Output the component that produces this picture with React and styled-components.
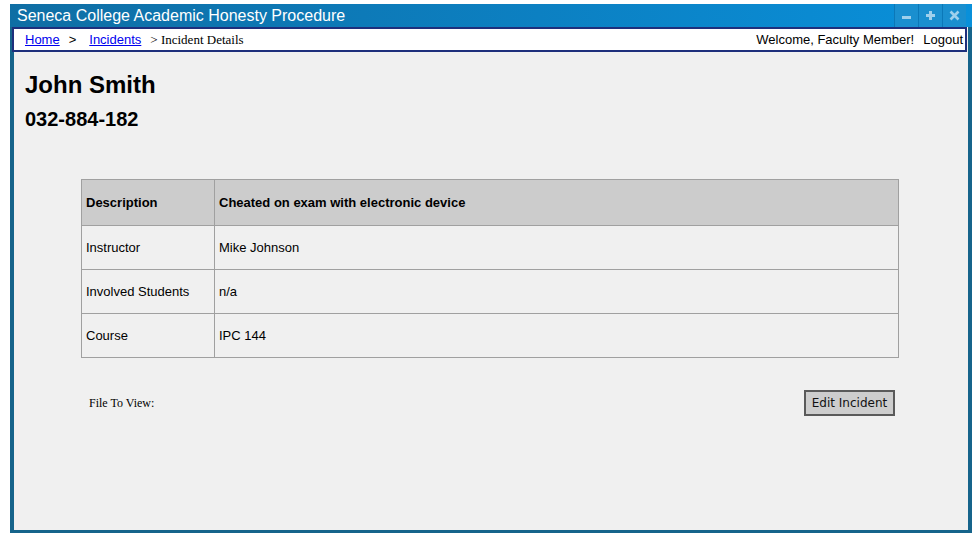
import React from 'react';
import styled, { createGlobalStyle } from 'styled-components';

const Global = createGlobalStyle`
  body {
    margin: 0;
    background: #ffffff;
    font-family: "Liberation Sans", Arial, sans-serif;
  }
`

const Window = styled.div`
  margin: 4px 0 0 10px;
  width: 962px;
  height: 529px;
  display: flex;
  flex-direction: column;
`

const TitleBar = styled.div`
  height: 23px;
  display: flex;
  align-items: stretch;
  background: linear-gradient(to right, #0f6ea4 0%, #0c80c2 55%, #0990da 100%);
`

const Title = styled.div`
  flex: 1;
  padding-left: 7px;
  color: #ffffff;
  font-size: 16px;
  line-height: 23px;
`

const WinButtons = styled.div`
  display: flex;
  padding-right: 6px;
`

const WinButton = styled.div`
  width: 23px;
  border-left: 1px solid #0b78b8;
  background: #1a8fcf;
  display: flex;
  align-items: center;
  justify-content: center;
`

const Frame = styled.div`
  flex: 1;
  background: #f0f0f0;
  border: 4px solid #16648b;
  border-top: none;
  border-bottom-width: 3px;
  display: flex;
  flex-direction: column;
`

const NavBar = styled.div`
  margin: 0 1px 0 -2px;
  height: 21px;
  border: 2px solid #1e2f7c;
  background: #ffffff;
  display: flex;
  align-items: center;
  justify-content: space-between;
  padding: 0 2px 0 11px;
  font-size: 13px;
`

const Crumbs = styled.div`
  display: flex;
  align-items: center;
`

const Link = styled.a`
  color: #0000ee;
  text-decoration: underline;
`

const Sep = styled.span`
  margin: ${p => p.$gap || '0 13px 0 9px'};
  color: #000;
`

const Current = styled.span`
  margin-left: 9px;
  font-family: "Liberation Serif", "Times New Roman", serif;
  font-size: 13px;
  color: #000;
`

const UserBox = styled.div`
  display: flex;
  gap: 9px;
  color: #000;
`

const Content = styled.div`
  padding: 19px 0 0 11px;
`

const Name = styled.h1`
  margin: 0;
  font-size: 24px;
  line-height: 28px;
  font-weight: bold;
  color: #000;
`

const StudentId = styled.h2`
  margin: 8px 0 0;
  font-size: 20px;
  line-height: 24px;
  font-weight: bold;
  color: #000;
`

const Details = styled.div`
  margin: 48px 0 0 56px;
  width: 818px;
`

const Table = styled.table`
  width: 818px;
  border-collapse: collapse;
  font-size: 13px;
  color: #000;
`

const Cell = styled.td`
  border: 1px solid #a0a0a0;
  padding: 0 0 0 4px;
  height: 43px;
  width: ${p => p.$w || 'auto'};
  font-weight: ${p => (p.$head ? 'bold' : 'normal')};
  background: ${p => (p.$head ? '#cccccc' : 'transparent')};
`

const HeadRow = styled.tr`
  height: 46px;
`

const Footer = styled.div`
  margin-top: 32px;
  display: flex;
  justify-content: space-between;
  align-items: flex-start;
  padding: 0 4px 0 8px;
`

const FileLabel = styled.span`
  margin-top: 6px;
  font-family: "Liberation Serif", "Times New Roman", serif;
  font-size: 12px;
  color: #000;
`

const EditButton = styled.button`
  width: 91px;
  height: 26px;
  border: 2px solid #5a5a5a;
  background: #cdcdcd;
  font-family: "DejaVu Sans", sans-serif;
  font-size: 12px;
  color: #111;
  padding: 0;
`

const Glyph = ({ type }) => (
  <svg width="11" height="11" viewBox="0 0 11 11">
    {type === 'min' && <rect x="1" y="6" width="9" height="3" fill="#9fd0ec" />}
    {type === 'max' && (
      <path d="M4 1h3v3h3v3H7v3H4V7H1V4h3z" fill="#9fd0ec" />
    )}
    {type === 'close' && (
      <path d="M1.5 1.5l8 8M9.5 1.5l-8 8" stroke="#9fd0ec" strokeWidth="2.6" />
    )}
  </svg>
)

const rows = [
  ['Instructor', 'Mike Johnson'],
  ['Involved Students', 'n/a'],
  ['Course', 'IPC 144'],
]

export default function App() {
  return (
    <>
      <Global />
      <Window>
        <TitleBar>
          <Title>Seneca College Academic Honesty Procedure</Title>
          <WinButtons>
            <WinButton><Glyph type="min" /></WinButton>
            <WinButton><Glyph type="max" /></WinButton>
            <WinButton><Glyph type="close" /></WinButton>
          </WinButtons>
        </TitleBar>
        <Frame>
          <NavBar>
            <Crumbs>
              <Link href="#">Home</Link>
              <Sep>&gt;</Sep>
              <Link href="#">Incidents</Link>
              <Current>&gt; Incident Details</Current>
            </Crumbs>
            <UserBox>
              <span>Welcome, Faculty Member!</span>
              <span>Logout</span>
            </UserBox>
          </NavBar>
          <Content>
            <Name>John Smith</Name>
            <StudentId>032-884-182</StudentId>
            <Details>
              <Table>
                <tbody>
                  <HeadRow>
                    <Cell $head $w="128px">Description</Cell>
                    <Cell $head>Cheated on exam with electronic device</Cell>
                  </HeadRow>
                  {rows.map(([k, v]) => (
                    <tr key={k}>
                      <Cell $w="128px">{k}</Cell>
                      <Cell>{v}</Cell>
                    </tr>
                  ))}
                </tbody>
              </Table>
              <Footer>
                <FileLabel>File To View:</FileLabel>
                <EditButton>Edit Incident</EditButton>
              </Footer>
            </Details>
          </Content>
        </Frame>
      </Window>
    </>
  );
}
